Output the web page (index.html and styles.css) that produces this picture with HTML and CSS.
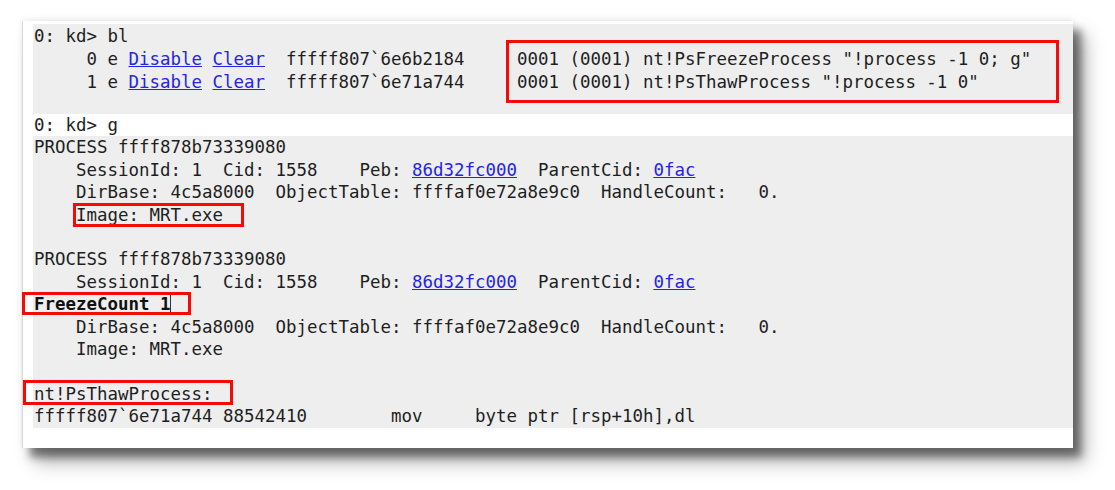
FILE: index.html
```html
<!DOCTYPE html>
<html>
<head>
<meta charset="utf-8">
<link rel="stylesheet" href="styles.css">
</head>
<body>
<div class="page">
<div class="card">
<div class="out"><pre class="block">0: kd&gt; bl
     0 e <a class="lnk">Disable</a> <a class="lnk">Clear</a>  fffff807`6e6b2184     0001 (0001) nt!PsFreezeProcess "!process -1 0; g"
     1 e <a class="lnk">Disable</a> <a class="lnk">Clear</a>  fffff807`6e71a744     0001 (0001) nt!PsThawProcess "!process -1 0"
 </pre><pre class="cmd">0: kd&gt; g</pre><pre class="block">PROCESS ffff878b73339080
    SessionId: 1  Cid: 1558    Peb: <a class="lnk">86d32fc000</a>  ParentCid: <a class="lnk">0fac</a>
    DirBase: 4c5a8000  ObjectTable: ffffaf0e72a8e9c0  HandleCount:   0.
    Image: MRT.exe

PROCESS ffff878b73339080
    SessionId: 1  Cid: 1558    Peb: <a class="lnk">86d32fc000</a>  ParentCid: <a class="lnk">0fac</a>
<b>FreezeCount 1</b><span class="caret"></span>
    DirBase: 4c5a8000  ObjectTable: ffffaf0e72a8e9c0  HandleCount:   0.
    Image: MRT.exe

nt!PsThawProcess:
fffff807`6e71a744 88542410        mov     byte ptr [rsp+10h],dl</pre></div>
<div class="mark m1"></div>
<div class="mark m2"></div>
<div class="mark m3"></div>
<div class="mark m4"></div>
</div>
</div>
</body>
</html>
```
FILE: styles.css
```css
html, body {
  margin: 0;
  padding: 0;
  background: #ffffff;
}
.page {
  padding: 21px 0 42px 22px;
  min-height: 490px;
  box-sizing: border-box;
}
.card {
  position: relative;
  width: 1051px;
  height: 427px;
  box-sizing: border-box;
  background: #ffffff;
  border-left: 1px solid #d8d8d8;
  box-shadow: 8px 9px 8px rgba(0, 0, 0, 0.45), 12px 14px 18px rgba(0, 0, 0, 0.3), 0 -2px 6px rgba(0, 0, 0, 0.07);
  padding: 3px 0 0 10px;
}
.out {
  display: flex;
  flex-direction: column;
}
pre {
  margin: 0;
  font-family: "DejaVu Sans Mono", "Liberation Mono", monospace;
  font-size: 17.44px;
  line-height: 22.4px;
  color: #1e1e1e;
  white-space: pre;
}
.block {
  background: #eeeeee;
  padding-left: 1px;
}
.block:first-child {
  line-height: 22.8px;
  height: 90px;
  padding-top: 1px;
  box-sizing: border-box;
}
.cmd {
  padding-left: 1px;
}
.lnk {
  color: #2424e6;
  text-decoration: underline;
}
b {
  font-weight: bold;
  color: #111111;
}
.caret {
  display: inline-block;
  width: 1px;
  height: 19px;
  background: #333333;
  vertical-align: -4px;
}
.mark {
  position: absolute;
  border: 3px solid #f50a0a;
  box-sizing: border-box;
}
.m1 { left: 483px; top: 19px; width: 553px; height: 63px; }
.m2 { left: 50px; top: 182px; width: 171px; height: 24px; }
.m3 { left: -1px; top: 271px; width: 169px; height: 23px; }
.m4 { left: 0px; top: 359px; width: 210px; height: 25px; }
```
